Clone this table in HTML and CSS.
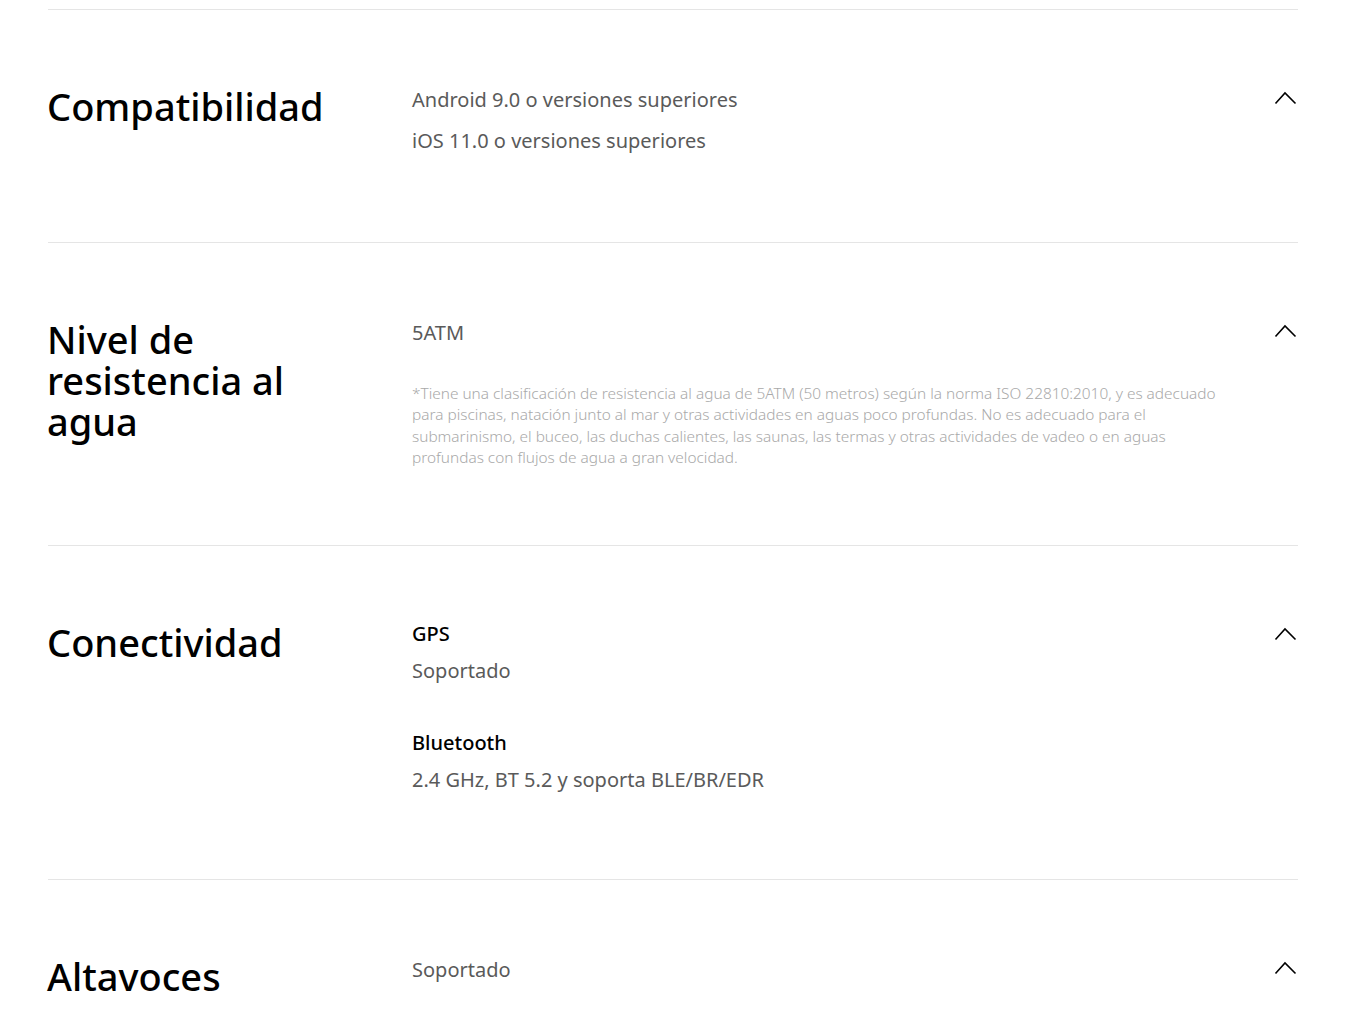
FILE: index.html
```html
<!DOCTYPE html>
<html lang="es">
<head>
<meta charset="utf-8">
<title>Especificaciones</title>
<link rel="stylesheet" href="styles.css">
</head>
<body>
<div class="specs">
  <section class="row">
    <h2 class="title">Compatibilidad</h2>
    <div class="body">
      <p class="val">Android 9.0 o versiones superiores</p>
      <p class="val">iOS 11.0 o versiones superiores</p>
    </div>
    <button class="toggle" aria-label="Contraer"><svg viewBox="0 0 24 24" width="24" height="24"><polyline points="1.5,12.5 11,2 21.5,12.5" fill="none" stroke="#000" stroke-width="1.6"/></svg></button>
  </section>
  <section class="row">
    <h2 class="title">Nivel de resistencia al agua</h2>
    <div class="body">
      <p class="val">5ATM</p>
      <p class="note">*Tiene una clasificación de resistencia al agua de 5ATM (50 metros) según la norma ISO 22810:2010, y es adecuado para piscinas, natación junto al mar y otras actividades en aguas poco profundas. No es adecuado para el submarinismo, el buceo, las duchas calientes, las saunas, las termas y otras actividades de vadeo o en aguas profundas con flujos de agua a gran velocidad.</p>
    </div>
    <button class="toggle" aria-label="Contraer"><svg viewBox="0 0 24 24" width="24" height="24"><polyline points="1.5,12.5 11,2 21.5,12.5" fill="none" stroke="#000" stroke-width="1.6"/></svg></button>
  </section>
  <section class="row">
    <h2 class="title">Conectividad</h2>
    <div class="body">
      <div class="item">
        <p class="label">GPS</p>
        <p class="ival">Soportado</p>
      </div>
      <div class="item">
        <p class="label">Bluetooth</p>
        <p class="ival">2.4 GHz, BT 5.2 y soporta BLE/BR/EDR</p>
      </div>
    </div>
    <button class="toggle" aria-label="Contraer"><svg viewBox="0 0 24 24" width="24" height="24"><polyline points="1.5,12.5 11,2 21.5,12.5" fill="none" stroke="#000" stroke-width="1.6"/></svg></button>
  </section>
  <section class="row">
    <h2 class="title">Altavoces</h2>
    <div class="body">
      <p class="val">Soportado</p>
    </div>
    <button class="toggle" aria-label="Contraer"><svg viewBox="0 0 24 24" width="24" height="24"><polyline points="1.5,12.5 11,2 21.5,12.5" fill="none" stroke="#000" stroke-width="1.6"/></svg></button>
  </section>
</div>
</body>
</html>
```
FILE: styles.css
```css
* { box-sizing: border-box; }
html, body { margin: 0; padding: 0; background: #fff; }
body {
  font-family: "Noto Sans", "Open Sans", sans-serif;
  color: #000;
  font-variant-ligatures: none;
}
.specs { margin: 9px 50px 0 48px; }
.row {
  display: grid;
  grid-template-columns: 364px 1fr 24px;
  border-top: 1px solid #e5e5e5;
  padding: 69px 0 81px;
}
.title {
  margin: 0 0 0 -1px;
  max-width: 300px;
  font-size: 38px;
  line-height: 41px;
  font-weight: 500;
  color: #000;
  padding-top: 7px;
}
.body { max-width: 815px; }
.body p { margin: 0; }
.val {
  font-size: 20px;
  line-height: 41px;
  color: #5a5a5a;
}
.note {
  margin-top: 30px !important;
  margin-bottom: -5px !important;
  font-size: 15.4px;
  line-height: 21.4px;
  font-weight: 300;
  color: #a9a9a9;
}
.item + .item { margin-top: 35px; }
.label {
  font-size: 20px;
  line-height: 37px;
  font-weight: 500;
  color: #000;
}
.ival {
  font-size: 20px;
  line-height: 37px;
  color: #5a5a5a;
}
.toggle {
  justify-self: end;
  align-self: start;
  margin-top: 12px;
  padding: 0;
  border: 0;
  background: none;
  width: 24px;
  height: 24px;
}
.toggle svg { display: block; }
```
